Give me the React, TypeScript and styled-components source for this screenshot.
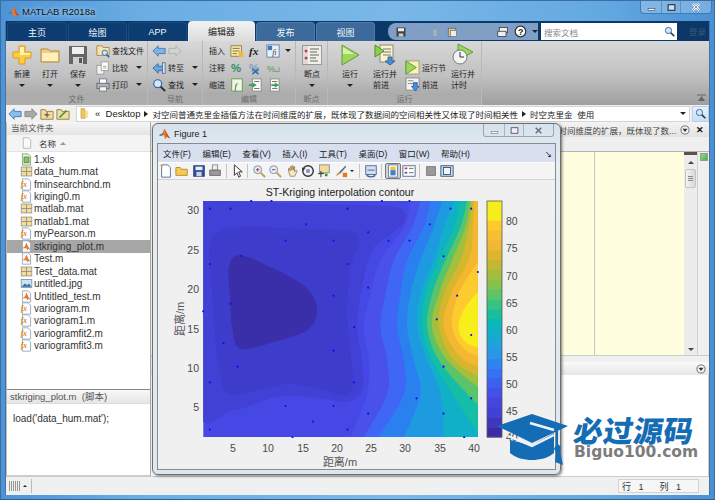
import React from "react";
import styled, { createGlobalStyle } from "styled-components";

const Global = createGlobalStyle`
  html, body { margin: 0; padding: 0; background: #fff; }
  * { box-sizing: border-box; }
`;
const SANS = `"Liberation Sans", "Noto Sans CJK SC", sans-serif`;

const Root = styled.div`
  position: relative; width: 715px; height: 500px; overflow: hidden;
  display: flex; flex-direction: column; padding: 0 4px 4px 4px;
  background: linear-gradient(90deg, #4d93d6 0, #6aaee3 20%, #79b8e8 55%, #62a8e0 85%, #4a90d4 100%);
  font-family: ${SANS}; color: #222; font-size: 10px;
  border: 1px solid #3a6ea5; border-bottom-color: #2f5f94;
`;
const TitleBar = styled.div`
  height: 20px; flex: none; display: flex; align-items: center; justify-content: space-between;
  padding-left: 2px;
`;
const TitleText = styled.span`
  font-size: 9.5px; color: #111; margin-left: 2px; text-shadow: 0 0 4px #dff0ff;
`;
const TitleLeft = styled.div`display: flex; align-items: center;`;
const WinControls = styled.div`
  align-self: flex-start; display: flex; height: 13px; margin-right: -2px;
  border: 1px solid #3f7cb5; border-top: none; border-radius: 0 0 4px 4px; background: rgba(255,255,255,.25);
`;
const WinBtn = styled.div<{ $w: number }>`
  width: ${p => p.$w}px; display: flex; align-items: center; justify-content: center;
  border-right: 1px solid #5a90c2; &:last-child { border-right: none; }
`;
const Shell = styled.div`flex: 1; display: flex; flex-direction: column; min-height: 0; background: #f0f0f0; border: 1px solid #47739f; border-top: none; border-bottom: none;`;
const TabBar = styled.div`
  height: 20px; flex: none; background: #0b3868; display: flex; align-items: flex-end; padding-left: 1px;
`;
const Tab = styled.div<{ $kind: "dark" | "active" | "light"; $w: number }>`
  width: ${p => p.$w}px; height: 19px; margin-right: 1px; border-radius: 4px 4px 0 0;
  display: flex; align-items: center; justify-content: center; font-size: 9px;
  color: ${p => (p.$kind === "active" ? "#222" : "#f2f6fb")};
  background: ${p => (p.$kind === "active" ? "linear-gradient(#f2f2f2,#dcdcdc)" : p.$kind === "light" ? "#3c6b9b" : "#0d3c70")};
  border: 1px solid ${p => (p.$kind === "dark" ? "#1b4a7e" : p.$kind === "light" ? "#4f7dab" : "#eee")};
  border-bottom: none;
  ${p => (p.$kind === "active" ? "height: 20px;" : "")}
`;
const TabSpacer = styled.div`width: 12px;`;
const Qat = styled.div`
  width: 150px; height: 17px; margin-bottom: 1px; display: flex; align-items: center; gap: 5px; padding-left: 7px;
  background: #7f9fc6; border-radius: 8px 0 0 8px;
`;
const SearchBox = styled.div`
  width: 136px; height: 17px; margin: 0 0 1px 3px; background: #fff; display: flex; align-items: center; justify-content: space-between;
  padding: 0 2px 0 3px; font-size: 8.5px; color: #888;
`;
const Login = styled.span`margin: 0 0 4px 12px; font-size: 8.5px; color: #3f5873;`;
const Ribbon = styled.div`
  height: 64px; flex: none; display: flex; background: linear-gradient(#d8d8d8 0, #c0c0c0 55%, #9f9f9f 100%); position: relative;
`;
const Group = styled.div<{ $w: number }>`
  width: ${p => p.$w}px; flex: none; display: flex; flex-direction: column; border-right: 1px solid #b8b8b8;
`;
const GroupBody = styled.div<{ $pl: number }>`
  flex: 1; display: flex; padding-left: ${p => p.$pl}px; min-height: 0;
`;
const GroupFoot = styled.div`
  height: 10px; flex: none; text-align: center; line-height: 10px; font-size: 8px; color: #6c6c6c; background: #adadad;
`;
const BigBtn = styled.div<{ $w: number }>`
  width: ${p => p.$w}px; flex: none; display: flex; flex-direction: column; align-items: center; padding-top: 2px;
  font-size: 8px; line-height: 11px; color: #222;
`;
const BigIcon = styled.div`height: 24px; margin-bottom: 2px; display: flex; align-items: center;`;
const Caret = styled.span`
  display: inline-block; flex: none; width: 0; height: 0; border: 3px solid transparent; border-top: 3px solid #222; border-bottom: none;
`;
const CaretSlot = styled.div`height: 11px; display: flex; align-items: center;`;
const ToolCol = styled.div<{ $w: number; $pl?: number }>`
  width: ${p => p.$w}px; flex: none; display: flex; flex-direction: column; padding: 1px 0 0 ${p => p.$pl ?? 0}px;
`;
const ToolRow = styled.div`
  height: 17px; display: flex; align-items: center; gap: 2px; font-size: 8px; color: #222; white-space: nowrap;
`;
const ToolIcons = styled.div`display: flex; gap: 4px; margin-left: 3px; align-items: center;`;
const PushRight = styled.span`margin-left: auto; margin-right: 4px; display: flex;`;
const CollapseMark = styled.svg`position: absolute; right: 3px; bottom: 3px;`;
const Address = styled.div`
  height: 17px; flex: none; display: flex; align-items: center; background: #f0f0f0; padding-left: 2px; gap: 2px;
`;
const AddrInput = styled.div`
  flex: 1; height: 16px; margin-left: 4px; background: #fff; border: 1px solid #d4d4d4; display: flex; align-items: center;
  padding-left: 2px; gap: 4px; font-size: 8.5px; white-space: nowrap; overflow: hidden;
`;
const Latin = styled.span`font-size: 9.5px; margin-left: 1px;`;
const Crumb = styled.span`
  display: inline-block; flex: none; width: 0; height: 0; border: 3px solid transparent; border-left: 4px solid #222; border-right: none;
`;
const AddrEnd = styled.div`margin-left: auto; margin-right: 3px; display: flex;`;
const AddrSearch = styled.div`width: 17px; height: 16px; background: linear-gradient(#e8f2fc,#c6def5); border: 1px solid #b8d0e8; display: flex; align-items: center; justify-content: center; margin-right: 0;`;
const Main = styled.div`flex: 1; display: flex; min-height: 0;`;
const LeftPane = styled.div`
  width: 145px; flex: none; display: flex; flex-direction: column; background: #fff; border-left: 1px solid #bbb; border-right: 1px solid #aaa;
`;
const PaneHead = styled.div`
  height: 13px; flex: none; background: linear-gradient(#f6f6f6,#e4e4e4); font-size: 8.5px; color: #555; padding-left: 4px; line-height: 13px;
`;
const NameHead = styled.div`
  height: 17px; flex: none; display: flex; align-items: center; padding-left: 14px; gap: 6px; background: #f4f4f4; border-bottom: 1px solid #e2e2e2;
  font-size: 8.5px; color: #333;
`;
const SortUp = styled.span`
  display: inline-block; width: 0; height: 0; border: 3px solid transparent; border-bottom: 3px solid #999; border-top: none; margin-left: -2px;
`;
const FileList = styled.div`flex: 1; min-height: 0; padding-top: 1px;`;
const FileRow = styled.div<{ $sel?: boolean }>`
  height: 12.45px; display: flex; align-items: center; padding-left: 13px; gap: 1px; font-size: 10px; color: #333; white-space: nowrap;
  background: ${p => (p.$sel ? "#a6a6a6" : "transparent")};
`;
const DetailHead = styled.div`
  height: 14px; flex: none; border-top: 1px solid #888; background: linear-gradient(#f8f8f8,#e6e6e6); font-size: 9.5px; color: #555; padding-left: 3px; line-height: 13px;
`;
const DetailBody = styled.div`
  height: 73px; flex: none; background: #fff; padding: 9px 0 0 6px; font-size: 10px; color: #333; border-top: 1px solid #ddd; border-bottom: 1px solid #ccc;
`;
const RightPane = styled.div`flex: 1; display: flex; flex-direction: column; min-width: 0;`;
const DocTitle = styled.div`
  height: 15px; flex: none; display: flex; align-items: center; justify-content: flex-end; background: linear-gradient(#f4f4f4,#e2e2e2);
  font-size: 8.5px; color: #444; gap: 4px; padding-right: 5px; white-space: nowrap; overflow: hidden;
`;
const CloseX = styled.span`font-size: 9px; font-weight: bold; color: #111; margin-left: 2px;`;
const DocTabs = styled.div`height: 15px; flex: none; background: #efefef; border-bottom: 1px solid #b5b5b5;`;
const EditorRow = styled.div`height: 204px; flex: none; display: flex; border-bottom: 1px solid #ccc;`;
const Editor = styled.div`
  flex: 1; background: #ffffdf; display: grid; grid-template-columns: 1fr 90px; min-width: 0;
`;
const EditorCode = styled.div`border-left: 1px solid #c8c8c0;`;
const Scroll = styled.div`
  width: 13px; flex: none; background: #ececec; display: flex; flex-direction: column; align-items: center; position: relative;
`;
const ScrollMark = styled.div`width: 100%; height: 3px; background: #5a5050;`;
const ScrollUp = styled.span`
  margin-top: 6px; width: 0; height: 0; border: 3px solid transparent; border-bottom: 3px solid #444; border-top: none;
`;
const ScrollThumb = styled.div`
  width: 11px; height: 19px; margin-top: 5px; border: 1px solid #c4c4c4; border-radius: 2px; background: linear-gradient(90deg,#f4f4f4,#d8d8d8);
  display: flex; flex-direction: column; align-items: center; justify-content: center; gap: 1px;
`;
const ThumbLine = styled.span`width: 5px; height: 1px; background: #888;`;
const ScrollDown = styled.span`
  margin-top: auto; margin-bottom: 4px; width: 0; height: 0; border: 3px solid transparent; border-top: 3px solid #444; border-bottom: none;
`;
const Strip = styled.div`width: 12px; flex: none; background: #efefef; border-left: 1px solid #d0d0d0; padding: 1px 0 0 2px;`;
const GreenBox = styled.div`width: 8px; height: 8px; background: linear-gradient(135deg,#8fe27a,#46b04a); border: 1px solid #999;`;
const CmdGap = styled.div`height: 6px; flex: none; background: #f0f0f0;`;
const CmdHead = styled.div`
  height: 13px; flex: none; background: linear-gradient(#fafafa,#e6e6e6); display: flex; justify-content: flex-end; align-items: center; padding-right: 3px;
`;
const CmdBody = styled.div`flex: 1; background: #fff; border-right: 1px solid #ccc;`;
const Status = styled.div`
  height: 19px; flex: none; display: flex; align-items: center; background: #f0f0f0; border-top: 1px solid #ccc; padding-left: 3px; font-size: 9px;
`;
const StatusGrip = styled.div`display: flex; align-items: center; gap: 2px; padding-right: 4px; border-right: 1px solid #bbb; height: 14px;`;
const Bars = styled.span`
  width: 12px; height: 10px; background: repeating-linear-gradient(90deg,#999 0 1px,#eee 1px 2px);
`;
const TinyUp = styled.span`width: 0; height: 0; border: 2px solid transparent; border-bottom: 2px solid #222; border-top: none;`;
const StatusCell = styled.div`
  margin-left: auto; margin-right: 10px; width: 81px; height: 14px; background: #f6f6f6; border: 1px solid #d2d2d2; display: flex; align-items: center; padding-left: 3px; gap: 4px;
  color: #333;
`;
const StatusGap = styled.span`width: 8px;`;

/* figure window */
const Figure = styled.div`
  position: absolute; left: 151px; top: 122px; width: 409px; height: 352px; padding: 0 4px 4px;
  display: flex; flex-direction: column; border-radius: 6px; border: 1px solid #6f6f6f;
  background: linear-gradient(#d6e2ec, #e8eef3 12%, #dfe7ee);
  box-shadow: 1px 1px 3px rgba(0,0,0,.55);
`;
const FigTitle = styled.div`
  height: 19px; flex: none; display: flex; align-items: center; justify-content: space-between; font-size: 9px; color: #222;
`;
const FigTitleLeft = styled.div`display: flex; align-items: center; gap: 3px; padding-left: 1px;`;
const FigControls = styled.div`
  align-self: flex-start; display: flex; height: 13px; margin-right: 2px; border: 1px solid #9aa7b3; border-top: none; border-radius: 0 0 3px 3px;
`;
const FigBtn = styled.div<{ $w: number }>`
  width: ${p => p.$w}px; display: flex; align-items: center; justify-content: center; border-right: 1px solid #aab5bf; &:last-child { border-right: none; }
`;
const FigFrame = styled.div`flex: 1; display: flex; flex-direction: column; border: 1px solid #8a8a8a; background: #f0f0f0; min-height: 0;`;
const FigMenu = styled.div`
  height: 18px; flex: none; background: #d8e0f0; display: flex; align-items: center; padding-left: 5px; gap: 11.6px; font-size: 8.5px; color: #222; position: relative;
`;
const MenuArrow = styled.span`position: absolute; right: 3px; top: 5px; font-size: 7px; font-weight: bold;`;
const FigTools = styled.div`
  height: 18px; flex: none; display: flex; align-items: center; padding-left: 0; gap: 0.4px; background: #f4f4f4; border-top: 1px solid #fff; border-bottom: 1px solid #d2d2d2;
`;
const ToolBtn = styled.div<{ $on?: boolean }>`
  width: 16px; height: 16px; display: flex; align-items: center; justify-content: center; border-radius: 2px;
  ${p => (p.$on ? "background: #d4d4d4; border: 1px solid #777;" : "")}
`;
const ToolSep = styled.span`width: 1px; height: 14px; background: #c4c4c4; margin: 0 2px;`;
const SmallCaret = styled.span`
  width: 0; height: 0; border: 2px solid transparent; border-top: 2px solid #222; border-bottom: none; margin: 0 3px 0 1px;
`;
const PlotArea = styled.div`flex: 1; min-height: 0; background: #f0f0f0;`;
const PlotSvg = styled.svg`display: block;`;
const Glyph = styled.svg`display: block; flex: none;`;

/* watermark */
const Mark = styled.div`
  position: absolute; left: 495px; top: 412px; display: flex; align-items: flex-start; gap: 4px; pointer-events: none;
`;
const MarkText = styled.div`display: flex; flex-direction: column; padding-top: 1px;`;
const MarkCn = styled.span`
  font: 900 29.5px/30px "Noto Sans CJK SC", sans-serif; color: #146cb4; transform: skewX(-8deg); letter-spacing: 0.5px; white-space: nowrap;
`;
const MarkEn = styled.span`
  font: bold 15.5px/16px "DejaVu Sans", sans-serif; color: #7c7c7c; white-space: nowrap;
`;

/* icons */
const I = ({ s = 14, children }: { s?: number; children: React.ReactNode }) => (
  <Glyph width={s} height={s} viewBox="0 0 16 16">{children}</Glyph>
);
const MatlabLogo = ({ s = 14 }: { s?: number }) => (
  <I s={s}>
    <path d="M1 10l4-2 3-6 3 6 4 6-4-2-2 3-2-5z" fill="#e8792a" />
    <path d="M1 10l4-2 2 1-3 2z" fill="#3f7fb0" />
    <path d="M8 2l3 6 4 6-4-2z" fill="#c9481c" />
  </I>
);
const PagePath = "M3 1h7l3 3v11H3z";
const Page = () => <path d={PagePath} fill="#fdfdfd" stroke="#8aa0b8" />;
const MFile = () => (
  <I s={13}><Page /><text x="1" y="11" fontSize="9" fontStyle="italic" fontWeight="bold" fill="#d9861a" fontFamily="Liberation Serif">fx</text></I>
);
const ScriptFile = () => (
  <I s={13}><Page /><path d="M3 10l3-2 2-5 2 5 3 4-3-1-1 2-1-3z" fill="#e8792a" /></I>
);
const MatFile = () => (
  <I s={13}>
    <rect x="1.5" y="2.5" width="13" height="11" fill="#f8dc8c" stroke="#8a94a4" />
    <path d="M8 2.5v11M1.5 8h13" stroke="#7e8a9c" />
  </I>
);
const XlsFile = () => (
  <I s={13}><path d={PagePath} fill="#e6f0da" stroke="#7fa06a" /><rect x="5" y="5" width="6" height="7" fill="#8fbf6a" stroke="#4d8a3a" /></I>
);
const JpgFile = () => (
  <I s={13}>
    <rect x="1.5" y="3" width="13" height="10" fill="#cfe3f3" stroke="#7890a8" />
    <path d="M2 12l4-4 3 2 2-2 3 4z" fill="#2f6f9f" />
  </I>
);
const PlusIcon = () => (
  <Glyph width={20} height={20} viewBox="0 0 20 20">
    <path d="M7 1h6v6h6v6h-6v6H7v-6H1V7h6z" fill="#fccf3e" stroke="#d99a28" />
    <path d="M8 2h4v6h6v2H8z" fill="#fff0a8" />
  </Glyph>
);
const BigFolder = () => (
  <Glyph width={20} height={20} viewBox="0 0 20 20">
    <path d="M1 4h7l2 2h9v11H1z" fill="#f0cf80" stroke="#b98a3a" />
    <path d="M2 8h16v8H2z" fill="#fdf0bc" />
  </Glyph>
);
const BigDisk = () => (
  <Glyph width={20} height={20} viewBox="0 0 20 20">
    <path d="M1 1h18v18H1z" fill="#666" />
    <rect x="4" y="2" width="12" height="7" fill="#f0f0f0" />
    <rect x="5" y="12" width="10" height="7" fill="#cfcfcf" />
    <rect x="11" y="13" width="3" height="5" fill="#555" />
  </Glyph>
);
const FindFile = () => (
  <I><path d="M1 2h6l1 2h7v9H1z" fill="#f4e4b0" stroke="#a8853e" /><circle cx="10" cy="10" r="3" fill="#cfe6fa" stroke="#2f68a8" /><path d="M12 12l3 3" stroke="#2f68a8" strokeWidth="2" /></I>
);
const Compare = () => (
  <I><rect x="1" y="5" width="8" height="10" fill="#f4f4f4" stroke="#999" /><rect x="6" y="1" width="8" height="10" fill="#fff" stroke="#999" /><path d="M8 6h4M8 8h4" stroke="#b8a070" /></I>
);
const Printer = () => (
  <I><rect x="4" y="1" width="8" height="6" fill="#fff" stroke="#777" /><rect x="1" y="6" width="14" height="6" fill="#aab4c0" stroke="#667" /><rect x="4" y="10" width="8" height="5" fill="#f4f4f4" stroke="#777" /></I>
);
const ArrowL = ({ c = "#7fb2e4", b = "#3f79b8" }: { c?: string; b?: string }) => (
  <I><path d="M1 8l6-6v3h8v6H7v3z" fill={c} stroke={b} /></I>
);
const ArrowR = ({ c = "#d0d4d0", b = "#a9aea9" }: { c?: string; b?: string }) => (
  <I><path d="M15 8L9 2v3H1v6h8v3z" fill={c} stroke={b} /></I>
);
const GotoIcon = () => (
  <I><path d="M1 8l6-5v3h5v5H7v3z" fill="#6aa6dc" stroke="#2f68a8" /><rect x="12" y="2" width="3" height="12" fill="#dce6f0" stroke="#48719c" /></I>
);
const Loupe = ({ s = 14 }: { s?: number }) => (
  <I s={s}><circle cx="6.5" cy="6.5" r="4.5" fill="#d4e8fa" stroke="#33699f" strokeWidth="1.4" /><path d="M10 10l5 5" stroke="#2d2d2d" strokeWidth="2.2" /></I>
);
const NoteIcon = () => (
  <I><rect x="1" y="2" width="12" height="12" fill="#f8e9a8" stroke="#8a7a40" /><path d="M3 5h8M3 8h8M3 11h5" stroke="#7a6a30" /><path d="M10 9h5v6h-5z" fill="#f4b73a" /></I>
);
const FxIcon = () => (
  <I><text x="1" y="13" fontFamily="Liberation Serif" fontStyle="italic" fontWeight="bold" fontSize="13" fill="#222">fx</text></I>
);
const FnBlock = () => (
  <I><rect x="1" y="1" width="14" height="14" fill="#e8f0fa" stroke="#5c7fa8" /><path d="M2 2h5v5H2z" fill="#3f78c0" /><text x="7" y="13" fontSize="9" fontStyle="italic" fill="#333" fontFamily="Liberation Serif">fi</text></I>
);
const Pct = ({ c = "#2f8f5f" }: { c?: string }) => (
  <I><text x="1" y="13" fontFamily="Liberation Sans" fontWeight="bold" fontSize="13" fill={c}>%</text></I>
);
const PctX = () => (
  <I><text x="1" y="13" fontFamily="Liberation Sans" fontWeight="bold" fontSize="13" fill="#7fa0c0">%</text><path d="M5 9l7 6M12 9l-7 6" stroke="#2f68b8" strokeWidth="1.6" /></I>
);
const PctW = () => (
  <I><text x="1" y="12" fontFamily="Liberation Sans" fontWeight="bold" fontSize="11" fill="#7aa870">%</text><path d="M10 12h5v-5" fill="none" stroke="#888" /></I>
);
const IndentA = () => (
  <I><rect x="2" y="1" width="12" height="14" fill="#eef8e0" stroke="#5a9a4a" /><text x="5" y="12" fontSize="10" fontStyle="italic" fill="#333" fontFamily="Liberation Serif">f</text></I>
);
const IndentB = ({ flip }: { flip?: boolean }) => (
  <I><rect x="5" y="1" width="10" height="14" fill="#f8f8f8" stroke="#888" /><path d="M7 4h6M7 12h6" stroke="#666" />{flip ? <path d="M15 8l-5-3v2H6v2h4v2z" fill="#3ea04a" /> : <path d="M10 8L5 5v2H1v2h4v2z" fill="#3ea04a" />}</I>
);
const BreakIcon = () => (
  <Glyph width={22} height={22} viewBox="0 0 22 22">
    <rect x="1.5" y="1.5" width="19" height="19" fill="#f2efe6" stroke="#999" />
    <rect x="2" y="2" width="5" height="18" fill="#dcdcdc" />
    <circle cx="5" cy="7" r="1.5" fill="#c8403a" /><circle cx="5" cy="14" r="1.5" fill="#c8403a" />
    <path d="M9 5h9M9 8h7M9 11h9M9 14h6M9 17h8" stroke="#666" />
  </Glyph>
);
const Play = ({ s = 22 }: { s?: number }) => (
  <Glyph width={s} height={s} viewBox="0 0 22 22">
    <path d="M3 1l17 10L3 21z" fill="#9fd65a" stroke="#5f9e3a" />
    <path d="M4 3l11 7H4z" fill="#d8f2a8" />
  </Glyph>
);
const RunAdvance = () => (
  <Glyph width={22} height={22} viewBox="0 0 22 22">
    <rect x="6" y="1" width="13" height="17" fill="#fdf3c8" stroke="#888" />
    <path d="M9 5h8M9 8h8M9 11h8" stroke="#777" />
    <path d="M1 1l9 6-9 6z" fill="#8ed04e" stroke="#4f8e30" />
    <path d="M14 13h4v4h3l-5 4-5-4h3z" fill="#4a8fd8" stroke="#2f68a8" />
  </Glyph>
);
const RunSection = () => (
  <I s={15}><rect x="1" y="1" width="14" height="14" fill="#fdf0b0" stroke="#999" /><path d="M1 1l11 7-11 7z" fill="#9ed65a" stroke="#5a9a3a" /></I>
);
const Advance = () => (
  <I s={15}><rect x="1" y="1" width="14" height="13" fill="#f4f4f4" stroke="#888" /><path d="M3 4h6M3 7h6" stroke="#886" /><path d="M9 6h4v4h2l-4 5-4-5h2z" fill="#4a8fd8" stroke="#2f68a8" /></I>
);
const RunTimer = () => (
  <Glyph width={22} height={24} viewBox="0 0 22 24">
    <path d="M6 1l15 8-15 8z" fill="#9fd65a" stroke="#5f9e3a" />
    <circle cx="8" cy="14" r="7" fill="#f4f4f4" stroke="#777" />
    <path d="M8 9v5h4" fill="none" stroke="#333" />
  </Glyph>
);
const Tb = {
  new: <I><path d={PagePath} fill="#fff" stroke="#4a6a92" /><path d="M2 1l2 2" stroke="#f0a020" strokeWidth="2" /></I>,
  open: <I><path d="M1 13V4h5l1 2h7v7z" fill="#f4c95a" stroke="#b58a28" /></I>,
  save: <I><rect x="2" y="2" width="12" height="12" fill="#2d4fa8" stroke="#1f3670" /><rect x="4" y="3" width="8" height="4" fill="#e8eef8" /><rect x="5" y="9" width="6" height="5" fill="#cfd4dc" /></I>,
  print: <I><rect x="5" y="1" width="6" height="6" fill="#eee" stroke="#888" /><rect x="2" y="7" width="12" height="6" fill="#9a9a9a" stroke="#666" /></I>,
  arrow: <I><path d="M5 1v12l3-3 2 5 2-1-2-5h4z" fill="#fff" stroke="#222" /></I>,
  zin: <I><circle cx="6.5" cy="6.5" r="4.5" fill="#e4f0fa" stroke="#6b87a6" /><path d="M4.5 6.5h4M6.5 4.5v4" stroke="#c23b2c" strokeWidth="1.2" /><path d="M10 10l5 5" stroke="#c8a050" strokeWidth="2.2" /></I>,
  zout: <I><circle cx="6.5" cy="6.5" r="4.5" fill="#e4f0fa" stroke="#6b87a6" /><path d="M4.5 6.5h4" stroke="#c23b2c" strokeWidth="1.2" /><path d="M10 10l5 5" stroke="#c8a050" strokeWidth="2.2" /></I>,
  hand: <I><path d="M4 8V5l1 0 1 3V3h1l1 4V2h1l1 5V3h1v6l2-2 1 1-3 6H6z" fill="#f8e6c4" stroke="#8a6a3a" strokeWidth=".8" /></I>,
  rot: <I><circle cx="8" cy="8" r="6" fill="#eef" stroke="#333" strokeWidth="1.6" /><path d="M2 8l-1-4 4 1z" fill="#333" /><rect x="6" y="6" width="4" height="4" fill="#88a" /></I>,
  cursor: <I><rect x="3" y="1" width="11" height="9" fill="#f2dc9c" stroke="#888" /><path d="M1 11h7M4.5 8v7" stroke="#222" /><rect x="9" y="11" width="3" height="3" fill="#2f8f3f" /></I>,
  brush: <I><path d="M2 14l3-5 2 2z" fill="#c89040" /><path d="M6 9l7-7 1 1-7 8z" fill="#5a6a7a" /><rect x="10" y="10" width="5" height="5" fill="#e8762a" /></I>,
  link: <I><rect x="2" y="2" width="12" height="10" fill="#cfe0f2" stroke="#44648c" /><path d="M3 13c3 2 7 2 10 0" fill="none" stroke="#44648c" strokeWidth="1.5" /><path d="M4 7h8" stroke="#44648c" /></I>,
  cbar: <I><rect x="3" y="1" width="10" height="14" fill="#fff" stroke="#5878a0" /><rect x="5" y="3" width="6" height="4" fill="#f2c23e" /><rect x="5" y="7" width="6" height="6" fill="#4a7fc8" /></I>,
  legend: <I><rect x="1" y="2" width="14" height="12" fill="#fff" stroke="#44648c" /><path d="M3 5h3" stroke="#d33" strokeWidth="2" /><path d="M3 10h3" stroke="#2a6ad0" strokeWidth="2" /><path d="M8 5h5M8 10h5" stroke="#555" /></I>,
  hide: <I><rect x="3" y="3" width="10" height="10" fill="#9a9a9a" stroke="#777" /></I>,
  frame: <I><rect x="1" y="2" width="14" height="12" fill="#c8dcf0" stroke="#2f5078" /><rect x="4" y="4" width="8" height="8" fill="#f4f4f4" stroke="#2f5078" /></I>,
};

/* plot data */
type P = [number, number];
const smooth = (pts: P[], closed = false) => {
  const n = pts.length;
  const at = (i: number) => (closed ? pts[(i + n) % n] : pts[Math.max(0, Math.min(n - 1, i))]);
  let d = `M${pts[0][0]} ${pts[0][1]}`;
  const last = closed ? n : n - 1;
  for (let i = 0; i < last; i++) {
    const a = at(i - 1), b = at(i), c = at(i + 1), e = at(i + 2);
    d += `C${(b[0] + (c[0] - a[0]) / 6).toFixed(1)} ${(b[1] + (c[1] - a[1]) / 6).toFixed(1)} ${(c[0] - (e[0] - b[0]) / 6).toFixed(1)} ${(c[1] - (e[1] - b[1]) / 6).toFixed(1)} ${c[0]} ${c[1]}`;
  }
  return closed ? d + "Z" : d;
};
const Y = [22, 100, 200, 300, 400, 500, 600, 730];
const row = (xs: number[]): P[] => xs.map((x, i) => [x, Y[i]] as P);
const bands: [string, P[]][] = [
  ["#4a50ea", row([660, 640, 570, 540, 520, 535, 530, 480])],
  ["#3f66f5", row([690, 665, 610, 585, 570, 590, 590, 520])],
  ["#2b80f0", row([720, 700, 650, 630, 620, 640, 640, 565])],
  ["#1e9ae0", row([755, 730, 690, 660, 650, 670, 690, 640])],
  ["#0fb0c8", row([790, 760, 730, 690, 680, 710, 750, 760])],
  ["#16bda6", row([810, 790, 745, 705, 695, 725, 785, 870])],
  ["#5bc468", [[830, 22], [810, 100], [765, 200], [725, 300], [710, 400], [745, 500], [830, 600], [880, 650]]],
  ["#a4bf3c", [[840, 22], [825, 100], [785, 200], [745, 300], [725, 400], [770, 500], [875, 590]]],
  ["#d5b62c", [[846, 22], [835, 100], [810, 200], [760, 300], [745, 400], [790, 500], [875, 555]]],
  ["#f5b731", [[852, 22], [847, 100], [838, 190], [782, 300], [760, 400], [810, 490], [875, 525]]],
  ["#fdcb2d", [[875, 190], [845, 230], [800, 310], [785, 400], [820, 465], [875, 490]]],
  ["#f7ee1c", [[875, 280], [825, 340], [804, 400], [825, 445], [875, 465]]],
];
const blobs: [string, P[]][] = [
  ["#4141d6", [[20, 30], [140, 25], [400, 32], [610, 40], [645, 75], [610, 115], [545, 170], [515, 280], [500, 400], [515, 500], [515, 590], [470, 625], [380, 612], [260, 610], [130, 650], [20, 640]]],
  ["#3e3ccb", [[62, 140], [150, 100], [300, 105], [470, 112], [505, 140], [480, 220], [470, 350], [480, 480], [488, 570], [465, 605], [400, 590], [300, 570], [200, 590], [115, 600], [85, 520], [65, 300]]],
  ["#3b2ea9", [[115, 220], [150, 185], [260, 230], [350, 285], [380, 350], [350, 410], [250, 445], [150, 465], [125, 400], [118, 300]]],
];
const dots: P[] = [[182,22],[243,22],[574,22],[657,22],[58,45],[120,45],[471,45],[780,45],[842,45],[347,92],[718,92],[533,116],[285,141],[429,141],[594,141],[657,141],[151,187],[759,188],[58,211],[471,211],[862,235],[533,282],[429,306],[800,306],[120,330],[38,353],[739,377],[491,401],[842,424],[99,448],[429,471],[141,519],[759,519],[58,566],[491,566],[678,614],[842,614],[285,637],[429,637],[533,660],[759,660],[368,684],[58,708],[471,708],[306,731],[821,731]];
const barColors = ["#f5ee1c","#f5ee1c","#fcc92e","#f7be30","#f2b733","#ddb62e","#c3b832","#a4bd3c","#84c24e","#5fc564","#38c380","#1bbe9c","#0bb7b8","#11aecb","#1ea3da","#2996e6","#2e85ef","#3373f3","#3c60f0","#4450e8","#4646de","#4040d4","#3d37bf","#3a2ca6"];

/* figure svg origin: page x 158, y 181 */
const OX = 158, OY = 181;
const xTicks: [string, number][] = [["5",233],["10",268],["15",303],["20",337],["25",371],["30",405],["35",440],["40",474]];
const yTicks: [string, number][] = [["30",211],["25",251],["20",290],["15",330],["10",369],["5",408]];
const cTicks: [string, number][] = [["80",222],["75",249],["70",277],["65",304],["60",331],["55",358],["50",385],["45",412],["40",438]];

const Plot = () => (
  <PlotSvg width={396} height={290} viewBox="0 0 396 290">
    <g fontFamily="Liberation Sans" fill="#4a4a4a" fontSize="10.5">
      <text x={340 - OX} y={197 - OY} textAnchor="middle" fontSize="10.6" fill="#222">ST-Kriging interpolation contour</text>
      {xTicks.map(([t, x]) => <text key={t} x={x - OX} y={453 - OY} textAnchor="middle">{t}</text>)}
      {yTicks.map(([t, y]) => <text key={t} x={199 - OX} y={y + 4 - OY} textAnchor="end">{t}</text>)}
      {cTicks.map(([t, y]) => <text key={t} x={506 - OX} y={y + 4 - OY}>{t}</text>)}
      <text x={340 - OX} y={467 - OY} textAnchor="middle" fontFamily="Liberation Sans, Noto Sans CJK SC" fontSize="11" fill="#555">距离/m</text>
      <text transform={`translate(${184 - OX} ${320 - OY}) rotate(-90)`} textAnchor="middle" fontFamily="Liberation Sans, Noto Sans CJK SC" fontSize="11" fill="#555">距离/m</text>
    </g>
    <svg x={203 - OX - 1} y={202 - OY - 1} width={277} height={238} viewBox="35 19 830 714">
      <clipPath id="ax"><rect x="38" y="22" width="824" height="708" /></clipPath>
      <g clipPath="url(#ax)">
        <rect x="38" y="22" width="824" height="708" fill="#4648e6" />
        {blobs.map(([c, p]) => <path key={c} d={smooth(p, true)} fill={c} />)}
        {bands.map(([c, p]) => (
          <path key={c} d={`${smooth(p)}L900 ${p[p.length - 1][1]}L900 ${p[0][1]}Z`} fill={c} />
        ))}
      </g>
      {dots.map(([x, y], i) => <circle key={i} cx={x} cy={y} r="3.2" fill="#0c0cf6" />)}
    </svg>
    <g transform={`translate(${487 - OX} ${202 - OY})`}>
      {barColors.map((c, i) => <rect key={i} x="0" y={i * (236 / 24)} width="15" height={236 / 24 + 0.5} fill={c} />)}
      <rect x="0" y="0" width="15" height="236" fill="none" stroke="#5a5a5a" strokeWidth="0.8" />
    </g>
  </PlotSvg>
);

const files: { name: string; Icon: React.FC; sel?: boolean }[] = [
  { name: "1.xls", Icon: XlsFile },
  { name: "data_hum.mat", Icon: MatFile },
  { name: "fminsearchbnd.m", Icon: MFile },
  { name: "kriging0.m", Icon: MFile },
  { name: "matlab.mat", Icon: MatFile },
  { name: "matlab1.mat", Icon: MatFile },
  { name: "myPearson.m", Icon: MFile },
  { name: "stkriging_plot.m", Icon: ScriptFile, sel: true },
  { name: "Test.m", Icon: ScriptFile },
  { name: "Test_data.mat", Icon: MatFile },
  { name: "untitled.jpg", Icon: JpgFile },
  { name: "Untitled_test.m", Icon: ScriptFile },
  { name: "variogram.m", Icon: MFile },
  { name: "variogram1.m", Icon: MFile },
  { name: "variogramfit2.m", Icon: MFile },
  { name: "variogramfit3.m", Icon: MFile },
];
const menus = ["文件(F)", "编辑(E)", "查看(V)", "插入(I)", "工具(T)", "桌面(D)", "窗口(W)", "帮助(H)"];
const LONG = "对空间普通克里金插值方法在时间维度的扩展，既体现了数据间的空间相关性又体现了时间相关性";

const Big = ({ icon, label, caret = true }: { icon: React.ReactNode; label: React.ReactNode; caret?: boolean }) => (
  <BigBtn $w={28}>
    <BigIcon>{icon}</BigIcon>
    {label}
    {caret && <CaretSlot><Caret /></CaretSlot>}
  </BigBtn>
);

export default function App() {
  return (
    <Root>
      <Global />
      <TitleBar>
        <TitleLeft><MatlabLogo s={13} /><TitleText>MATLAB R2018a</TitleText></TitleLeft>
        <WinControls>
          <WinBtn $w={21}><I s={9}><rect x="2" y="10" width="12" height="3" fill="#fff" stroke="#345" /></I></WinBtn>
          <WinBtn $w={19}><I s={9}><rect x="2" y="3" width="12" height="10" fill="#cfe0f0" stroke="#234" strokeWidth="2" /></I></WinBtn>
          <WinBtn $w={30}><I s={10}><path d="M3 3l10 10M13 3L3 13" stroke="#fff" strokeWidth="3.4" /><path d="M3 3l10 10M13 3L3 13" stroke="#456" strokeWidth="1" /></I></WinBtn>
        </WinControls>
      </TitleBar>
      <Shell>
        <TabBar>
          <Tab $kind="dark" $w={60}>主页</Tab>
          <Tab $kind="dark" $w={59}>绘图</Tab>
          <Tab $kind="dark" $w={59}>APP</Tab>
          <Tab $kind="active" $w={67}>编辑器</Tab>
          <Tab $kind="light" $w={59}>发布</Tab>
          <Tab $kind="light" $w={59}>视图</Tab>
          <TabSpacer />
          <Qat>
            <I s={12}><rect x="2" y="2" width="12" height="12" fill="#444" /><rect x="4" y="3" width="8" height="4" fill="#eee" /><rect x="5" y="10" width="6" height="4" fill="#ccc" /></I>
            <I s={12}><path d="M4 14l8-11M12 14L4 3" stroke="#8a98a8" strokeWidth="1.3" /></I>
            <I s={12}><path d="M5 4h6v10H5z" fill="#9fb2c6" stroke="#8a98a8" /></I>
            <I s={12}><rect x="3" y="3" width="10" height="11" fill="#d8c49a" stroke="#665" /><rect x="6" y="6" width="8" height="8" fill="#eee" stroke="#777" /></I>
            <I s={12}><path d="M3 6l3-3v2h5a3 3 0 010 7H7" fill="none" stroke="#8ea0b4" strokeWidth="1.4" /></I>
            <I s={12}><path d="M13 6l-3-3v2H5a3 3 0 000 7h4" fill="none" stroke="#8ea0b4" strokeWidth="1.4" /></I>
            <I s={12}><rect x="3" y="2" width="11" height="7" fill="#eee" stroke="#333" /><rect x="1" y="7" width="11" height="7" fill="#eee" stroke="#333" /></I>
            <I s={13}><circle cx="8" cy="8" r="6.5" fill="#fff" stroke="#333" strokeWidth="1.5" /><text x="5" y="12" fontSize="11" fontWeight="bold" fontFamily="Liberation Sans" fill="#222">?</text></I>
            <Caret />
          </Qat>
          <SearchBox>搜索文档<Loupe s={11} /></SearchBox>
          <Login>登录</Login>
        </TabBar>
        <Ribbon>
          <Group $w={142}>
            <GroupBody $pl={2}>
              <Big icon={<PlusIcon />} label="新建" />
              <Big icon={<BigFolder />} label="打开" />
              <Big icon={<BigDisk />} label="保存" />
              <ToolCol $w={54} $pl={4}>
                <ToolRow><FindFile />查找文件</ToolRow>
                <ToolRow><Compare />比较<PushRight><Caret /></PushRight></ToolRow>
                <ToolRow><Printer />打印<PushRight><Caret /></PushRight></ToolRow>
              </ToolCol>
            </GroupBody>
            <GroupFoot>文件</GroupFoot>
          </Group>
          <Group $w={55}>
            <GroupBody $pl={4}>
              <ToolCol $w={50}>
                <ToolRow><ArrowL /><ArrowR /></ToolRow>
                <ToolRow><GotoIcon />转至<PushRight><Caret /></PushRight></ToolRow>
                <ToolRow><Loupe />查找<PushRight><Caret /></PushRight></ToolRow>
              </ToolCol>
            </GroupBody>
            <GroupFoot>导航</GroupFoot>
          </Group>
          <Group $w={93}>
            <GroupBody $pl={6}>
              <ToolCol $w={86}>
                <ToolRow>插入<ToolIcons><NoteIcon /><FxIcon /><FnBlock /></ToolIcons><PushRight><Caret /></PushRight></ToolRow>
                <ToolRow>注释<ToolIcons><Pct /><PctX /><PctW /></ToolIcons></ToolRow>
                <ToolRow>缩进<ToolIcons><IndentA /><IndentB /><IndentB flip /></ToolIcons></ToolRow>
              </ToolCol>
            </GroupBody>
            <GroupFoot>编辑</GroupFoot>
          </Group>
          <Group $w={32}>
            <GroupBody $pl={2}>
              <Big icon={<BreakIcon />} label="断点" />
            </GroupBody>
            <GroupFoot>断点</GroupFoot>
          </Group>
          <Group $w={154}>
            <GroupBody $pl={7}>
              <BigBtn $w={30}><BigIcon><Play /></BigIcon>运行<CaretSlot><Caret /></CaretSlot></BigBtn>
              <BigBtn $w={40}><BigIcon><RunAdvance /></BigIcon>运行并<br />前进</BigBtn>
              <ToolCol $w={44}>
                <ToolRow />
                <ToolRow><RunSection />运行节</ToolRow>
                <ToolRow><Advance />前进</ToolRow>
              </ToolCol>
              <BigBtn $w={28}><BigIcon><RunTimer /></BigIcon>运行并<br />计时</BigBtn>
            </GroupBody>
            <GroupFoot>运行</GroupFoot>
          </Group>
          <CollapseMark width="9" height="8" viewBox="0 0 9 8"><path d="M0 1h9" stroke="#666" /><path d="M4.5 2L8 7H1z" fill="#666" /></CollapseMark>
        </Ribbon>
        <Address>
          <ArrowL c="#8abcec" b="#3f79b8" />
          <ArrowR c="#a8a8a8" b="#8a8a8a" />
          <I><path d="M1 3h5l1 2h8v9H1z" fill="#f0dca0" stroke="#927a3a" /><path d="M5 9h6M8 6v6" stroke="#333" /></I>
          <I><path d="M1 3h5l1 2h8v9H1z" fill="#f0dca0" stroke="#927a3a" /><path d="M4 12l8-8" stroke="#3a9a3a" strokeWidth="2" /></I>
          <AddrInput>
            <I s={11}><path d="M3 1h5l1 3v11H3z" fill="#f0c860" stroke="#c09838" /><path d="M9 4h4v10H9z" fill="#f8e090" /></I>
            <Latin>«&nbsp;&nbsp;Desktop</Latin>
            <Crumb />
            <span>{LONG}</span>
            <Crumb />
            <span>时空克里金&nbsp;&nbsp;使用</span>
            <AddrEnd><Caret /></AddrEnd>
          </AddrInput>
          <AddrSearch><Loupe s={11} /></AddrSearch>
        </Address>
        <Main>
          <LeftPane>
            <PaneHead>当前文件夹</PaneHead>
            <NameHead>
              <I s={12}><path d={PagePath} fill="#fafafa" stroke="#aaa" /></I>
              名称<SortUp />
            </NameHead>
            <FileList>
              {files.map(f => (
                <FileRow key={f.name} $sel={f.sel}><f.Icon />{f.name}</FileRow>
              ))}
            </FileList>
            <DetailHead>stkriging_plot.m&nbsp;&nbsp;(脚本)</DetailHead>
            <DetailBody>load('data_hum.mat');</DetailBody>
          </LeftPane>
          <RightPane>
            <DocTitle>
              <span>{LONG.slice(0, 26)}...</span>
              <I s={10}><circle cx="8" cy="8" r="6.5" fill="#f4f4f4" stroke="#666" strokeWidth="1.4" /><path d="M4 6h8l-4 5z" fill="#333" /></I>
              <CloseX>✕</CloseX>
            </DocTitle>
            <DocTabs />
            <EditorRow>
              <Editor><div /><EditorCode /></Editor>
              <Scroll>
                <ScrollMark />
                <ScrollUp />
                <ScrollThumb><ThumbLine /><ThumbLine /><ThumbLine /></ScrollThumb>
                <ScrollDown />
              </Scroll>
              <Strip><GreenBox /></Strip>
            </EditorRow>
            <CmdGap />
            <CmdHead><I s={10}><circle cx="8" cy="8" r="6.5" fill="#f4f4f4" stroke="#666" strokeWidth="1.4" /><path d="M4 6h8l-4 5z" fill="#333" /></I></CmdHead>
            <CmdBody />
          </RightPane>
        </Main>
        <Status>
          <StatusGrip><Bars /><TinyUp /></StatusGrip>
          <StatusCell>行&nbsp;&nbsp;&nbsp;1<StatusGap />列&nbsp;&nbsp;&nbsp;1</StatusCell>
        </Status>
      </Shell>

      <Figure>
        <FigTitle>
          <FigTitleLeft><MatlabLogo s={13} />Figure 1</FigTitleLeft>
          <FigControls>
            <FigBtn $w={21}><I s={9}><rect x="2" y="10" width="12" height="3" fill="#fff" stroke="#667" /></I></FigBtn>
            <FigBtn $w={19}><I s={9}><rect x="2" y="3" width="12" height="10" fill="#eef" stroke="#556" strokeWidth="1.6" /></I></FigBtn>
            <FigBtn $w={29}><I s={9}><path d="M3 3l10 10M13 3L3 13" stroke="#667" strokeWidth="2.4" /></I></FigBtn>
          </FigControls>
        </FigTitle>
        <FigFrame>
          <FigMenu>
            {menus.map(m => <span key={m}>{m}</span>)}
            <MenuArrow>↘</MenuArrow>
          </FigMenu>
          <FigTools>
            <ToolBtn>{Tb.new}</ToolBtn><ToolBtn>{Tb.open}</ToolBtn><ToolBtn>{Tb.save}</ToolBtn><ToolBtn>{Tb.print}</ToolBtn>
            <ToolSep />
            <ToolBtn>{Tb.arrow}</ToolBtn>
            <ToolSep />
            <ToolBtn>{Tb.zin}</ToolBtn><ToolBtn>{Tb.zout}</ToolBtn><ToolBtn>{Tb.hand}</ToolBtn><ToolBtn>{Tb.rot}</ToolBtn><ToolBtn>{Tb.cursor}</ToolBtn><ToolBtn>{Tb.brush}</ToolBtn>
            <SmallCaret />
            <ToolSep />
            <ToolBtn>{Tb.link}</ToolBtn>
            <ToolSep />
            <ToolBtn $on>{Tb.cbar}</ToolBtn><ToolBtn>{Tb.legend}</ToolBtn>
            <ToolSep />
            <ToolBtn>{Tb.hide}</ToolBtn><ToolBtn>{Tb.frame}</ToolBtn>
          </FigTools>
          <PlotArea><Plot /></PlotArea>
        </FigFrame>
      </Figure>

      <Mark>
        <Glyph width={74} height={52} viewBox="0 0 74 52">
          <path d="M36 1L72 13 36 30 1 13z" fill="#146cb4" />
          <path d="M14 27v13c6 5 14 7 22 7s16-2 22-7V20L36 32z" fill="#146cb4" />
          <path d="M12 23L36 33 58 22" fill="none" stroke="#eef4fa" strokeWidth="2.4" />
          <path d="M34 10L58 17" stroke="#eef4fa" strokeWidth="2.6" />
          <path d="M60 18v14l-2 4 2 3-1 10 8 3-3-14 1-4-3-3V18z" fill="#146cb4" />
        </Glyph>
        <MarkText>
          <MarkCn>必过源码</MarkCn>
          <MarkEn>Biguo100.com</MarkEn>
        </MarkText>
      </Mark>
    </Root>
  );
}
